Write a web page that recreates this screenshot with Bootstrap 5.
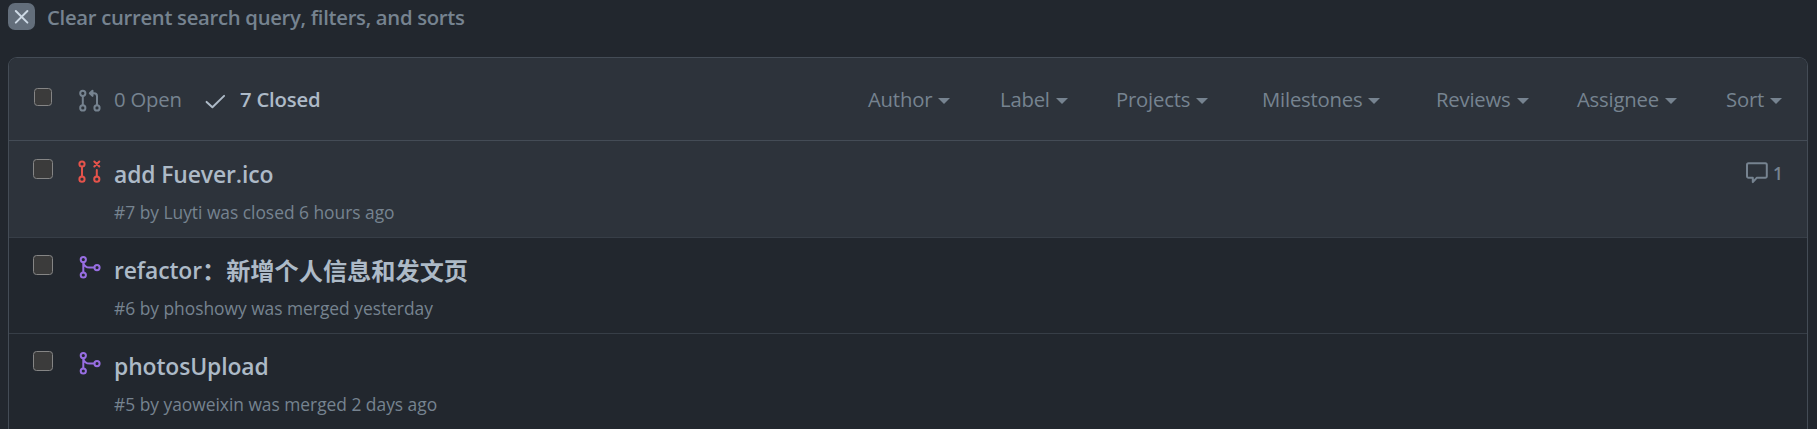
<!DOCTYPE html>
<html lang="en" data-bs-theme="dark">
<head>
<meta charset="utf-8">
<meta name="viewport" content="width=device-width, initial-scale=1">
<title>Pull requests</title>
<link href="https://cdn.jsdelivr.net/npm/bootstrap@5.3.0/dist/css/bootstrap.min.css" rel="stylesheet">
<style>
body{background:#22272e;color:#adbac7;font-family:"Open Sans","Noto Sans CJK SC",sans-serif}
a{color:inherit;text-decoration:none}
svg{display:block;flex:none;fill:none;stroke:currentColor;stroke-width:2;stroke-linecap:round;stroke-linejoin:round}
.dim{color:#768390}
.clear-link{height:33px;padding:3px 0 0 8px;margin-bottom:24px;font-size:20.3px;font-weight:600;line-height:28px;letter-spacing:-.3px}
.clear-link .clear-icon{width:27px;height:27px;border-radius:7px;background:#636e7b;color:#cdd9e5;margin-right:12px}
.pr-box{margin:0 9px 0 8px;height:372px;border:1px solid #444c56;border-bottom:0;border-radius:9px 9px 0 0;overflow:hidden}
.pr-head{height:83px;background:#2d333b;border-bottom:1px solid #444c56;font-size:20.3px;line-height:28px;letter-spacing:-.2px;padding:27px 0 0 25px}
.box-check.form-check-input{flex:none;width:20px;height:20px;margin:0;border:1px solid #858585;border-radius:3.5px;background-color:#3b3b3b}
.pr-head .box-check{width:18px;height:18px;margin-top:3px}
.head-open{flex:none;margin-left:26px;width:126px;white-space:nowrap}
.head-closed{font-weight:600}
.head-closed span{margin-left:12px}
.head-menu{display:grid;grid-template-columns:132px 116px 146px 174px 141px 149px 81px;margin-left:auto}
.drop-arrow{width:0;height:0;border:6px solid transparent;border-top-color:#768390;border-bottom:0;margin:3px 0 0 6px}
.pr-row{height:96px;padding:17px 24px 0 24px;border-top:1px solid #373e47}
.pr-row.first{border-top:0;padding-top:18px}
.pr-row.is-hover{background:#2d333b}
.pr-row .state{margin-left:24px}
.pr-title{height:32px;line-height:32px;font-size:22.9px;font-weight:600;letter-spacing:-.12px;white-space:nowrap}
.pr-title .cjk{display:inline-block;height:32px;vertical-align:top;margin-top:-1px;font-family:"Noto Sans CJK SC",sans-serif;font-size:24.2px;font-weight:700;letter-spacing:0}
.pr-body{margin-left:13px}
.pr-meta{margin-top:8px;line-height:27px;font-size:17.4px;letter-spacing:-.02px}
.is-closed{color:#e5534b}
.is-merged{color:#986ee2}
.comments{font-size:17.4px;font-weight:600;line-height:24px;margin-top:2px}
</style>
</head>
<body>
<a href="#" class="clear-link d-flex dim">
  <span class="clear-icon"><svg width="27" height="27" viewBox="0 0 27 27"><path d="M7.8 8 19.4 19.6M19.4 8 7.8 19.6"/></svg></span>
  <span>Clear current search query, filters, and sorts</span>
</a>
<main class="pr-box">
  <header class="pr-head d-flex align-items-start">
    <input type="checkbox" class="form-check-input box-check" aria-label="Select all">
    <a href="#" class="head-open d-flex dim">
      <svg width="24" height="24" viewBox="0 0 24 24" class="me-2 mt-1"><circle cx="4.8" cy="4.3" r="2.6"/><circle cx="4.8" cy="18.9" r="2.6"/><circle cx="19" cy="18.9" r="2.6"/><path d="M4.8 7v9.2M19 16.2V7.3a3 3 0 0 0-3-3H12.500M14.500 1.700 11.800 4.300 14.500 6.900z"/></svg>
      <span class="ms-1">0 Open</span></a>
    <a href="#" class="head-closed d-flex">
      <svg width="24" height="24" viewBox="0 0 24 24" class="mt-1"><path d="m2.600 12.900 5.800 5.300L20.100 6.900"/></svg>
      <span>7 Closed</span></a>
    <nav class="head-menu dim">
      <a href="#" class="d-flex align-items-center">Author<i class="drop-arrow"></i></a>
      <a href="#" class="d-flex align-items-center">Label<i class="drop-arrow"></i></a>
      <a href="#" class="d-flex align-items-center">Projects<i class="drop-arrow"></i></a>
      <a href="#" class="d-flex align-items-center">Milestones<i class="drop-arrow"></i></a>
      <a href="#" class="d-flex align-items-center">Reviews<i class="drop-arrow"></i></a>
      <a href="#" class="d-flex align-items-center">Assignee<i class="drop-arrow"></i></a>
      <a href="#" class="d-flex align-items-center">Sort<i class="drop-arrow"></i></a>
    </nav>
  </header>
  <article class="pr-row first is-hover d-flex align-items-start">
    <input type="checkbox" class="form-check-input box-check" aria-label="Select #7">
    <svg class="state is-closed" width="24" height="24" viewBox="0 0 24 24"><circle cx="5" cy="5" r="2.6"/><circle cx="5" cy="20.2" r="2.6"/><circle cx="19.8" cy="20.2" r="2.6"/><path d="M5 7.7v9.8M19.8 11v6.500M17.300 2.500l5 5M22.300 2.500l-5 5"/></svg>
    <div class="pr-body flex-grow-1">
      <a href="#" class="pr-title d-block">add Fuever.ico</a>
      <div class="pr-meta dim">#7 by Luyti was closed 6 hours ago</div>
    </div>
    <a href="#" class="comments d-flex dim">
      <svg width="24" height="24" viewBox="0 0 24 24" class="me-1"><path d="M3.500 2.300h16.800a1.500 1.500 0 0 1 1.500 1.500v11.500a1.500 1.500 0 0 1-1.500 1.500h-8.600l-3.900 4.300v-4.300H3.500A1.500 1.500 0 0 1 2 15.300V3.800a1.500 1.500 0 0 1 1.500-1.500z"/></svg>1</a>
  </article>
  <article class="pr-row d-flex align-items-start">
    <input type="checkbox" class="form-check-input box-check" aria-label="Select #6">
    <svg class="state is-merged" width="24" height="24" viewBox="0 0 24 24"><circle cx="6.300" cy="4.600" r="2.600"/><circle cx="6.300" cy="20" r="2.600"/><circle cx="20" cy="12.600" r="2.600"/><path d="M6.300 7.300v10M6.300 7.300c.6 3.500 3.400 5.300 6.500 5.300h4.500"/></svg>
    <div class="pr-body flex-grow-1">
      <a href="#" class="pr-title d-block">refactor<span class="cjk">：新增个人信息和发文页</span></a>
      <div class="pr-meta dim">#6 by phoshowy was merged yesterday</div>
    </div>
  </article>
  <article class="pr-row d-flex align-items-start">
    <input type="checkbox" class="form-check-input box-check" aria-label="Select #5">
    <svg class="state is-merged" width="24" height="24" viewBox="0 0 24 24"><circle cx="6.300" cy="4.600" r="2.600"/><circle cx="6.300" cy="20" r="2.600"/><circle cx="20" cy="12.600" r="2.600"/><path d="M6.300 7.300v10M6.300 7.300c.6 3.500 3.400 5.300 6.500 5.300h4.500"/></svg>
    <div class="pr-body flex-grow-1">
      <a href="#" class="pr-title d-block">photosUpload</a>
      <div class="pr-meta dim">#5 by yaoweixin was merged 2 days ago</div>
    </div>
  </article>
</main>
<script src="https://cdn.jsdelivr.net/npm/bootstrap@5.3.0/dist/js/bootstrap.bundle.min.js"></script>
</body>
</html>
